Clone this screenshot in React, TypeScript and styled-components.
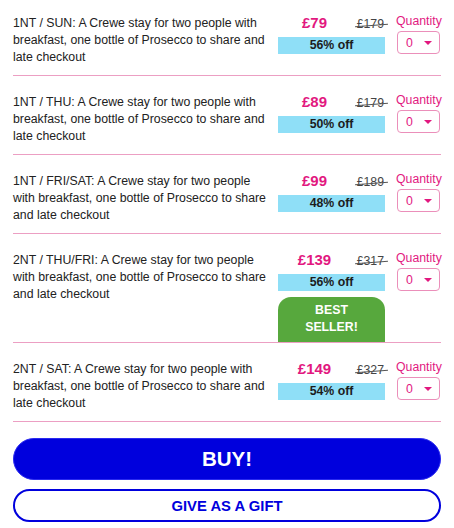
import React from 'react';
import styled, { createGlobalStyle } from 'styled-components';

const GlobalStyle = createGlobalStyle`
  html, body {
    margin: 0;
    padding: 0;
    background: #fff;
  }
  body {
    font-family: "Liberation Sans", Arial, Helvetica, sans-serif;
  }
`;

const PINK = '#e2187f';

const Page = styled.div`
  width: 454px;
  padding: 0 13px;
  box-sizing: border-box;
`;

const Row = styled.div`
  display: flex;
  align-items: flex-start;
  padding: 18px 0 9px;
  border-bottom: 1px solid #ec9fc3;

  &:first-child {
    padding-top: 15px;
  }
`;

const Desc = styled.div`
  flex: none;
  width: 258px;
  font-size: 12.3px;
  line-height: 17px;
  color: #222;
`;

const PriceCol = styled.div`
  flex: none;
  width: 107px;
  margin-left: 7px;
  display: flex;
  flex-direction: column;
`;

const PriceLine = styled.div`
  display: flex;
  align-items: baseline;
  height: 16px;
  margin-bottom: 6px;
`;

const Price = styled.span`
  width: 73px;
  text-align: center;
  font-size: 15px;
  line-height: 15px;
  font-weight: bold;
  color: ${PINK};
`;

const OldPrice = styled.span`
  flex: 1;
  text-align: right;
  font-size: 12.3px;
  line-height: 15px;
  color: #444;
`;

const Strike = styled.span`
  position: relative;
  display: inline-block;
  margin-right: 1px;

  &::after {
    content: '';
    position: absolute;
    left: -2px;
    right: -4px;
    top: 55%;
    height: 1px;
    background: #555;
    transform: rotate(-4deg);
  }
`;

const Discount = styled.div`
  height: 17px;
  background: #8fdff7;
  text-align: center;
  font-size: 12.3px;
  line-height: 17px;
  font-weight: bold;
  color: #1c1c1c;
`;

const Badge = styled.div`
  height: 45px;
  margin-top: 6px;
  margin-bottom: -9px;
  padding-top: 5px;
  box-sizing: border-box;
  background: #57a83d;
  border-radius: 13px 13px 0 0;
  text-align: center;
  font-size: 12.3px;
  line-height: 17px;
  font-weight: bold;
  color: #fff;
`;

const QtyCol = styled.div`
  flex: none;
  width: 46px;
  margin-left: 11px;
`;

const QtyLabel = styled.div`
  font-size: 12.3px;
  line-height: 13px;
  color: ${PINK};
  white-space: nowrap;
`;

const QtySelect = styled.div`
  display: flex;
  align-items: center;
  justify-content: space-between;
  width: 43px;
  height: 23px;
  margin: 3px 0 0 1px;
  padding: 0 7px 0 8px;
  box-sizing: border-box;
  border: 1px solid #eb8fba;
  border-radius: 4px;
  font-size: 12.3px;
  color: ${PINK};
`;

const Caret = styled.span`
  width: 0;
  height: 0;
  margin-top: 1px;
  border-left: 4px solid transparent;
  border-right: 4px solid transparent;
  border-top: 4px solid ${PINK};
`;

const Actions = styled.div`
  display: flex;
  flex-direction: column;
  gap: 9px;
  margin-top: 16px;
`;

const BuyButton = styled.button`
  height: 42px;
  border: 1px solid #2a2af0;
  border-radius: 21px;
  background: #0000dd;
  color: #fff;
  font-family: inherit;
  font-size: 20.5px;
  font-weight: bold;
  cursor: pointer;
`;

const GiftButton = styled.button`
  height: 33px;
  border: 2px solid #0000dd;
  border-radius: 17px;
  background: #fff;
  color: #0000dd;
  font-family: inherit;
  font-size: 14.8px;
  font-weight: bold;
  cursor: pointer;
`;

type Offer = {
  title: string;
  price: string;
  was: string;
  off: string;
  best?: boolean;
};

const offers: Offer[] = [
  { title: '1NT / SUN', price: '£79', was: '£179', off: '56% off' },
  { title: '1NT / THU', price: '£89', was: '£179', off: '50% off' },
  { title: '1NT / FRI/SAT', price: '£99', was: '£189', off: '48% off' },
  { title: '2NT / THU/FRI', price: '£139', was: '£317', off: '56% off', best: true },
  { title: '2NT / SAT', price: '£149', was: '£327', off: '54% off' },
];

export default function App() {
  return (
    <Page>
      <GlobalStyle />
      <div>
        {offers.map((o) => (
          <Row key={o.title}>
            <Desc>
              {`${o.title}: A Crewe stay for two people with breakfast, one bottle of Prosecco to share and late checkout`}
            </Desc>
            <PriceCol>
              <PriceLine>
                <Price>{o.price}</Price>
                <OldPrice>
                  <Strike>{o.was}</Strike>
                </OldPrice>
              </PriceLine>
              <Discount>{o.off}</Discount>
              {o.best && (
                <Badge>
                  BEST
                  <br />
                  SELLER!
                </Badge>
              )}
            </PriceCol>
            <QtyCol>
              <QtyLabel>Quantity</QtyLabel>
              <QtySelect>
                <span>0</span>
                <Caret />
              </QtySelect>
            </QtyCol>
          </Row>
        ))}
      </div>
      <Actions>
        <BuyButton>BUY!</BuyButton>
        <GiftButton>GIVE AS A GIFT</GiftButton>
      </Actions>
    </Page>
  );
}
